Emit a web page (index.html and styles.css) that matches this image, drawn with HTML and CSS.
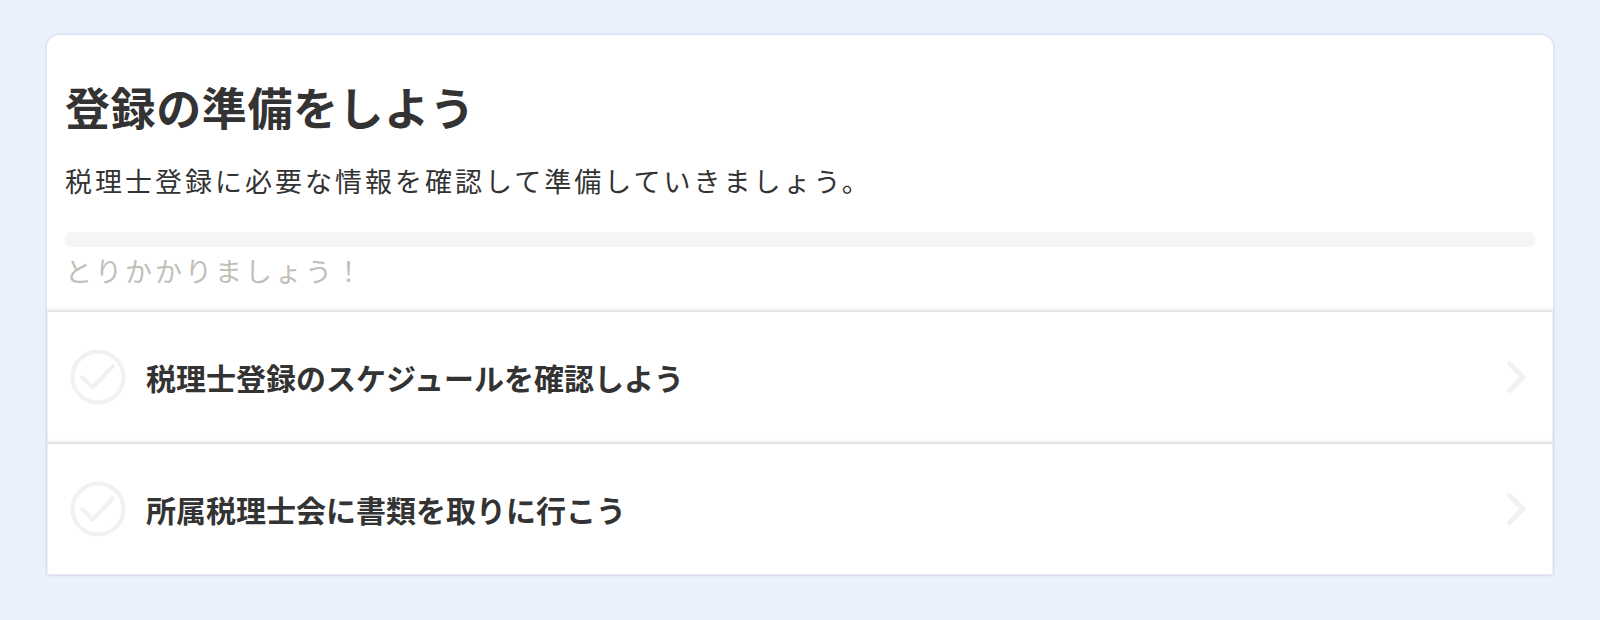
FILE: index.html
```html
<!DOCTYPE html>
<html lang="ja">
<head>
    <meta charset="UTF-8">
    <meta name="viewport" content="width=device-width, initial-scale=1.0">
    <title>登録の準備をしよう</title>
    <link rel="stylesheet" href="styles.css">
</head>
<body>
    <div class="card">
        <div class="card-head">
            <h1 class="title">登録の準備をしよう</h1>
            <p class="lead">税理士登録に必要な情報を確認して準備していきましょう。</p>
            <div class="progress"><div class="progress-bar" style="width: 0%"></div></div>
            <p class="progress-label">とりかかりましょう！</p>
        </div>

        <ul class="tasks">
            <li class="task">
                <svg class="task-check" width="56" height="56" viewBox="0 0 56 56">
                    <circle cx="28" cy="28" r="25.5" />
                    <path d="M12 28 L22.5 38.5 L43 17" />
                </svg>
                <span class="task-name">税理士登録のスケジュールを確認しよう</span>
                <svg class="task-arrow" width="22" height="36" viewBox="0 0 22 36">
                    <path d="M3 3 L18 18 L3 33" />
                </svg>
            </li>
            <li class="task">
                <svg class="task-check" width="56" height="56" viewBox="0 0 56 56">
                    <circle cx="28" cy="28" r="25.5" />
                    <path d="M12 28 L22.5 38.5 L43 17" />
                </svg>
                <span class="task-name">所属税理士会に書類を取りに行こう</span>
                <svg class="task-arrow" width="22" height="36" viewBox="0 0 22 36">
                    <path d="M3 3 L18 18 L3 33" />
                </svg>
            </li>
        </ul>
    </div>
</body>
</html>
```

FILE: styles.css
```css
body {
    margin: 0;
    padding: 35px 47px;
    background-color: #eaf1fd;
    color: #333;
    font-family: "Noto Sans CJK JP", "Noto Sans", sans-serif;
}

.card {
    background: #fff;
    border-radius: 12px 12px 0 0;
    box-shadow: 0 0 3px rgba(70, 100, 160, 0.28);
}

.card-head {
    padding: 42px 18px 19px;
}

.title {
    margin: 0;
    font-size: 45px;
    line-height: 60px;
    letter-spacing: 0.6px;
    font-weight: 700;
    color: #333;
}

.lead {
    margin: 24px 0 0;
    font-size: 27px;
    line-height: 40px;
    letter-spacing: 3px;
}

.progress {
    margin-top: 31px;
    height: 15px;
    border-radius: 5px;
    background: #f6f4f4;
    overflow: hidden;
}

.progress-bar {
    height: 100%;
    background: #3c8cf0;
}

.progress-label {
    margin: 4px 0 0;
    font-size: 27px;
    line-height: 40px;
    letter-spacing: 3px;
    color: #c2beb8;
}

.tasks {
    list-style: none;
    margin: 0;
    padding: 0;
}

.task {
    display: flex;
    align-items: center;
    height: 130px;
    padding: 0 25px 0 22px;
    border-top: 2px solid #e6e4e4;
    border-left: 1px solid #f1efef;
    border-right: 1px solid #f1efef;
    box-shadow: 0 -2px 3px rgba(0, 0, 0, 0.04);
}

.task:last-child {
    border-bottom: 1px solid #ebe9e9;
}

.task-check {
    flex-shrink: 0;
    fill: none;
    stroke: #f2f0f0;
    stroke-width: 4;
    stroke-linecap: round;
    stroke-linejoin: round;
}

.task-name {
    margin-left: 20px;
    font-size: 30px;
    line-height: 42px;
    font-weight: 700;
    color: #333;
}

.task-arrow {
    margin-left: auto;
    fill: none;
    stroke: #f2f0f0;
    stroke-width: 5;
}
```
